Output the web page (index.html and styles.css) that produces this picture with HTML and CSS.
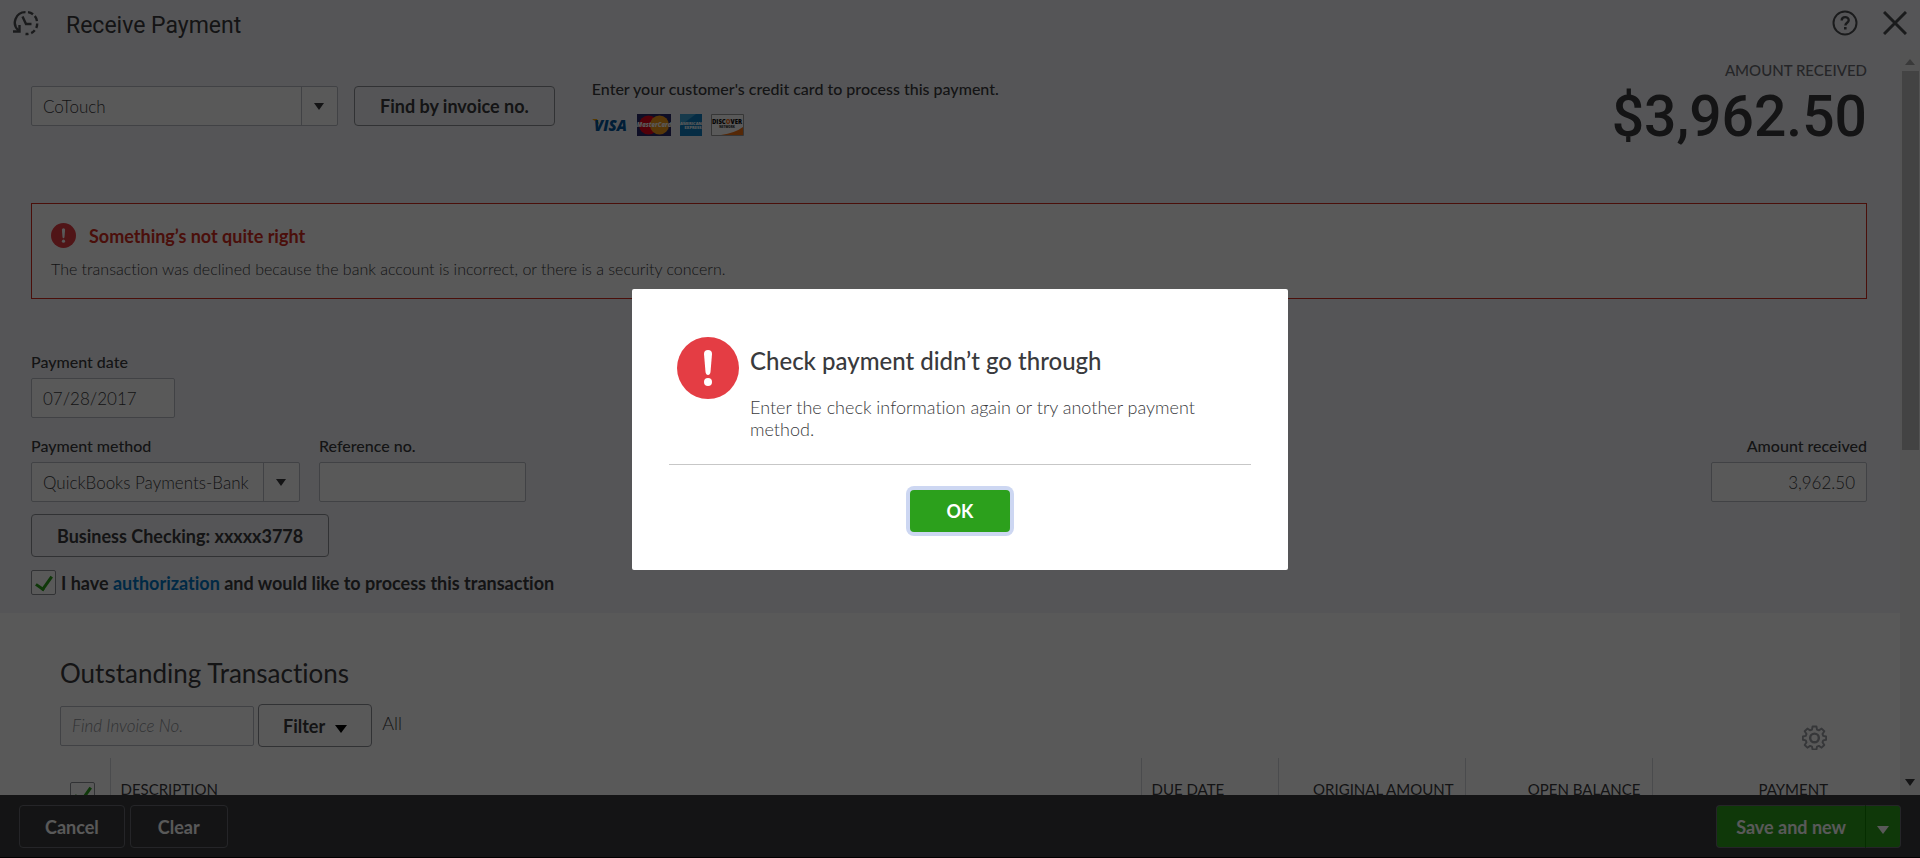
FILE: index.html
```html
<!DOCTYPE html>
<html lang="en">
<head>
    <meta charset="UTF-8">
    <meta name="viewport" content="width=device-width, initial-scale=1.0">
    <title>Receive Payment</title>
    <link rel="stylesheet" href="styles.css">
</head>
<body>
<div class="page">
    <header class="topbar">
        <svg class="history-icon" viewBox="0 0 26 26" fill="none" stroke="#4c4d52" stroke-width="2.400">
            <path d="M5.500 20.500A10.500 10.500 0 0 1 12.500 2.100"/>
            <path d="M15 2.100A10.500 10.500 0 0 1 24 11.500" stroke-dasharray="5.500 2.500"/>
            <path d="M24.200 13.500A10.500 10.500 0 0 1 12.500 24" stroke-dasharray="4.500 2.800"/>
            <path d="M0 21.500h6.500V15"/>
            <path d="M9.500 6.500l3.500 7.500h5.500"/>
        </svg>
        <h1>Receive Payment</h1>
        <button class="icon-button" type="button" aria-label="Help">
            <svg width="26" height="26" viewBox="0 0 26 26" fill="none" stroke="#4c4d52" stroke-width="2">
                <circle cx="13" cy="13" r="11.500"/>
                <path d="M9.700 10.500c0-4.600 7-4.400 7 -.3 0 2.500-3.300 2.600-3.300 5.300" stroke-width="2.400"/>
                <path d="M13.300 17v2.500" stroke-width="2.600"/>
            </svg>
        </button>
        <button class="icon-button" type="button" aria-label="Close">
            <svg width="24" height="24" viewBox="0 0 24 24" fill="none" stroke="#4c4d52" stroke-width="3">
                <path d="M1 1l22 22M23 1L1 23"/>
            </svg>
        </button>
    </header>

    <div class="body">
        <main class="content">
            <section class="payment">
                <div class="customer-row">
                    <div class="dropdown customer">
                        <select aria-label="Customer">
                            <option>CoTouch</option>
                        </select>
                        <span class="arrow"></span>
                    </div>
                    <button class="btn find" type="button">Find by invoice no.</button>
                    <div class="cards">
                        <p>Enter your customer's credit card to process this payment.</p>
                        <div class="card-logos">
                            <svg width="36" height="22" viewBox="0 0 36 22">
                                <path d="M0 5h5l2 5z" fill="#f7a600"/>
                                <text x="2" y="17" class="logo-text" font-size="15" fill="#00579f">VISA</text>
                            </svg>
                            <svg width="34" height="22" viewBox="0 0 34 22">
                                <path fill="#2a2a6c" d="M0 0h34v22H0z"/>
                                <circle cx="11.500" cy="11" r="9.500" fill="#eb001b"/>
                                <circle cx="22.500" cy="11" r="9.500" fill="#f79e1b"/>
                                <text x="17" y="13" class="logo-text" font-size="6" fill="#fff" text-anchor="middle">MasterCard</text>
                            </svg>
                            <svg width="22" height="22" viewBox="0 0 22 22">
                                <path fill="#0f7fc4" d="M0 0h22v22H0z"/>
                                <path fill="#5fc0ea" d="M0 0h16L0 12z" opacity=".6"/>
                                <text x="11" y="11" class="logo-text plain" font-size="4" fill="#fff" text-anchor="middle">AMERICAN</text>
                                <text x="13" y="15" class="logo-text plain" font-size="4" fill="#fff" text-anchor="middle">EXPRESS</text>
                            </svg>
                            <svg width="33" height="22" viewBox="0 0 33 22">
                                <path fill="#fff" stroke="#9a9a9a" d="M.5.500h32v21H.5z"/>
                                <path fill="#f47216" d="M10 21q14-2 22-8v8z"/>
                                <text x="16" y="10" class="logo-text plain" font-size="6" fill="#111" text-anchor="middle">DISC<tspan fill="#f47216">O</tspan>VER</text>
                                <text x="16" y="14" class="logo-text plain" font-size="3" fill="#333" text-anchor="middle">NETWORK</text>
                            </svg>
                        </div>
                    </div>
                    <div class="total">
                        <div class="total-label">AMOUNT RECEIVED</div>
                        <div class="total-value">$3,962.50</div>
                    </div>
                </div>

                <div class="alert" role="alert">
                    <div class="alert-title">
                        <svg width="25" height="25" viewBox="0 0 62 62">
                            <circle cx="31" cy="31" r="31" fill="#e43d44"/>
                            <path fill="#fff" d="M27 17q0-4 4-4t4 4l-1.500 18q-.5 3-2.500 3t-2.500-3z"/>
                            <circle cx="31" cy="45" r="4" fill="#fff"/>
                        </svg>
                        <strong>Something’s not quite right</strong>
                    </div>
                    <p>The transaction was declined because the bank account is incorrect, or there is a security concern.</p>
                </div>

                <div class="field date">
                    <label for="payDate">Payment date</label>
                    <input type="text" id="payDate" value="07/28/2017">
                </div>

                <div class="method-row">
                    <div class="field method">
                        <label for="payMethod">Payment method</label>
                        <div class="dropdown">
                            <select id="payMethod">
                                <option>QuickBooks Payments-Bank</option>
                            </select>
                            <span class="arrow"></span>
                        </div>
                    </div>
                    <div class="field reference">
                        <label for="refNo">Reference no.</label>
                        <input type="text" id="refNo">
                    </div>
                    <div class="field amount">
                        <label for="amount">Amount received</label>
                        <input type="text" id="amount" value="3,962.50">
                    </div>
                </div>

                <button class="btn account" type="button">Business Checking: xxxxx3778</button>

                <div class="authorize">
                    <input type="checkbox" id="authorize" checked>
                    <label for="authorize">I have <a href="#">authorization</a> and would like to process this transaction</label>
                </div>
            </section>

            <section class="outstanding">
                <h2>Outstanding Transactions</h2>
                <div class="tools">
                    <input type="text" class="search" placeholder="Find Invoice No." aria-label="Find Invoice No.">
                    <button class="btn filter" type="button">Filter <span class="arrow"></span></button>
                    <span class="all">All</span>
                    <button class="icon-button gear" type="button" aria-label="Settings">
                        <svg width="25" height="25" viewBox="0 0 26 26" fill="none" stroke="#9a9da4" stroke-width="2" stroke-linejoin="round">
                            <path d="M11 1.500h4l.6 3.300 2 .8 2.800-1.900 2.800 2.800-1.900 2.800.8 2 3 .6v3.500l-3 .6-.8 2 1.900 2.800-2.800 2.800-2.800-1.900-2 .8-.6 3h-4l-.6-3-2-.8-2.800 1.900-2.800-2.800 1.900-2.800-.8-2-3-.6v-3.500l3-.6.8-2-1.900-2.800 2.800-2.800 2.800 1.900 2-.8z"/>
                            <circle cx="13" cy="13.500" r="4.500" stroke-width="2.500"/>
                        </svg>
                    </button>
                </div>
                <table>
                    <thead>
                    <tr>
                        <th class="col-check"><input type="checkbox" aria-label="Select all" checked></th>
                        <th>DESCRIPTION</th>
                        <th class="col-due">DUE DATE</th>
                        <th class="col-money">ORIGINAL AMOUNT</th>
                        <th class="col-money">OPEN BALANCE</th>
                        <th class="col-money">PAYMENT</th>
                    </tr>
                    </thead>
                </table>
            </section>
        </main>
        <div class="scrollbar">
            <span class="arrow up"></span>
            <div class="track"><div class="thumb"></div></div>
            <span class="arrow"></span>
        </div>
    </div>

    <footer class="bottombar">
        <button class="btn dark" type="button">Cancel</button>
        <button class="btn dark clear" type="button">Clear</button>
        <div class="save">
            <button class="btn green" type="button">Save and new</button>
            <button class="btn green more" type="button" aria-label="More save options"><span class="arrow"></span></button>
        </div>
    </footer>
</div>

<div class="overlay">
    <div class="modal" role="dialog" aria-labelledby="modalTitle">
        <div class="message">
            <svg width="62" height="62" viewBox="0 0 62 62">
                <circle cx="31" cy="31" r="31" fill="#e43d44"/>
                <path fill="#fff" d="M27 17q0-4 4-4t4 4l-1.500 18q-.5 3-2.500 3t-2.500-3z"/>
                <circle cx="31" cy="45" r="4" fill="#fff"/>
            </svg>
            <div class="message-text">
                <h3 id="modalTitle">Check payment didn’t go through</h3>
                <p>Enter the check information again or try another payment method.</p>
            </div>
        </div>
        <div class="actions">
            <button class="btn green ok" type="button">OK</button>
        </div>
    </div>
</div>
</body>
</html>
```
FILE: styles.css
```css
* {
    box-sizing: border-box;
}

body {
    margin: 0;
    font-family: Lato, "Liberation Sans", sans-serif;
    font-size: 17px;
    font-variant-ligatures: none;
    color: #393a3d;
}

h1, h2, h3, p {
    margin: 0;
}

input, select, button {
    font-family: inherit;
    font-size: inherit;
    color: inherit;
}

.page {
    display: flex;
    flex-direction: column;
    height: 100vh;
    background: #f4f4f8;
    overflow: hidden;
}

/* header */
.topbar {
    display: flex;
    align-items: center;
    flex: none;
    height: 50px;
    padding: 0 13px 4px;
}

.topbar h1 {
    flex: 1;
    margin: 4px 0 0 27px;
    font-family: Roboto, sans-serif;
    font-size: 23px;
    font-weight: 400;
}

.history-icon {
    width: 26px;
    height: 26px;
}

.icon-button {
    display: flex;
    padding: 0;
    margin-left: 25px;
    border: none;
    background: none;
    cursor: pointer;
}

/* controls */
.btn {
    height: 43px;
    padding: 0 25px;
    border: 1px solid #8d9096;
    border-radius: 4px;
    background: transparent;
    font-size: 18px;
    font-weight: 700;
    white-space: nowrap;
    cursor: pointer;
}

.arrow {
    display: inline-block;
    border: 5px solid transparent;
    border-top: 7px solid #393a3d;
    border-bottom: none;
}

input[type="text"], select {
    width: 100%;
    height: 40px;
    padding: 0 11px;
    border: 1px solid #babec5;
    border-radius: 2px;
    background: #fff;
    font-weight: 300;
}

select {
    appearance: none;
}

.dropdown {
    position: relative;
}

.dropdown .arrow {
    position: absolute;
    top: 17px;
    right: 14px;
}

.dropdown::after {
    content: "";
    position: absolute;
    top: 0;
    bottom: 0;
    right: 36px;
    border-left: 1px solid #babec5;
}

input[type="checkbox"] {
    appearance: none;
    display: grid;
    place-items: center;
    width: 25px;
    height: 25px;
    margin: 0;
    border: 1px solid #8d9096;
    border-radius: 2px;
    background: #fff;
}

input[type="checkbox"]:checked::before {
    content: "";
    width: 7px;
    height: 14px;
    margin-bottom: 3px;
    border: solid #2ca01c;
    border-width: 0 3px 3px 0;
    transform: rotate(35deg);
}

/* payment form */
.body {
    display: flex;
    flex: 1;
    min-height: 0;
}

.content {
    flex: 1;
    overflow: hidden;
}

.payment {
    padding: 10px 33px 18px 31px;
}

.customer-row {
    display: flex;
    align-items: flex-start;
    height: 143px;
}

.customer {
    width: 307px;
    margin: 26px 16px 0 0;
}

.find {
    height: 40px;
    margin: 26px 37px 0 0;
}

.cards {
    flex: 1;
    padding-top: 18px;
    font-size: 16px;
    line-height: 22px;
    font-weight: 500;
}

.card-logos {
    display: flex;
    gap: 9px;
    margin-top: 14px;
}

.logo-text {
    font-family: "Open Sans", sans-serif;
    font-style: italic;
    font-weight: 800;
}

.plain {
    font-style: normal;
}

.total {
    text-align: right;
}

.total-label {
    font-size: 15px;
    line-height: 20px;
    color: #6b6c72;
    font-weight: 500;
}

.total-value {
    font-family: Roboto, sans-serif;
    font-size: 57px;
    line-height: 74px;
    font-weight: 500;
}

.alert {
    height: 96px;
    padding: 19px;
    border: 1px solid #d52b1e;
    background: #fff;
    font-size: 16px;
    font-weight: 300;
}

.alert-title {
    display: flex;
    align-items: center;
    gap: 13px;
    margin-bottom: 11px;
    font-size: 18px;
    color: #d52b1e;
}

.alert-title strong {
    font-weight: 700;
}

.field label {
    display: block;
    margin-bottom: 6px;
    font-size: 16px;
    line-height: 20px;
    font-weight: 500;
}

.date {
    width: 144px;
    margin-top: 53px;
}

.method-row {
    display: flex;
    margin: 18px 0 12px;
}

.method {
    width: 269px;
    margin-right: 19px;
}

.reference {
    width: 207px;
}

.amount {
    width: 156px;
    margin-left: auto;
    text-align: right;
}

.amount input {
    text-align: right;
}

.authorize {
    display: flex;
    align-items: center;
    gap: 5px;
    margin-top: 13px;
    font-size: 18px;
    font-weight: 700;
}

.authorize a {
    color: #0077c5;
    text-decoration: none;
}

/* outstanding transactions */
.outstanding {
    padding: 44px 61px 0 60px;
    background: #fff;
}

.outstanding h2 {
    font-size: 26px;
    line-height: 32px;
    font-weight: 400;
}

.tools {
    display: flex;
    align-items: center;
    gap: 4px;
    height: 43px;
    margin: 15px 0 11px;
}

.tools .search {
    width: 194px;
}

.search::placeholder {
    font-style: italic;
    color: #8d9096;
}

.filter {
    padding: 0 24px;
}

.filter .arrow {
    margin: 0 0 0 6px;
    border-width: 8px 6px 0;
    border-top-color: #000;
}

.all {
    padding: 0 0 5px 6px;
    font-size: 18px;
    font-weight: 300;
}

.gear {
    align-self: flex-end;
    margin: 0 12px -3px auto;
}

table {
    width: 100%;
    border-collapse: collapse;
}

th {
    height: 62px;
    padding: 0 11px 0 10px;
    border-left: 1px solid #d4d7dc;
    font-size: 15px;
    font-weight: 400;
    text-align: left;
}

th:first-child {
    border-left: none;
}

.col-check {
    width: 50px;
    padding-top: 10px;
}

.col-due {
    width: 137px;
}

.col-money {
    width: 187px;
    text-align: right;
}

.scrollbar {
    display: flex;
    flex-direction: column;
    align-items: center;
    width: 20px;
    padding: 9px 0;
    background: #f1f1f1;
}

.track {
    flex: 1;
    width: 17px;
    margin: 6px 0;
}

.thumb {
    height: 54%;
    background: #c1c1c1;
}

.up {
    border: 5px solid transparent;
    border-top: none;
    border-bottom: 6px solid #a3a3a3;
}

/* footer */
.bottombar {
    display: flex;
    flex: none;
    gap: 5px;
    height: 63px;
    padding: 10px 19px;
    border-bottom: 1px solid #000;
    background: #393a3d;
    color: #fff;
}

.dark {
    border-color: #6b6c72;
}

.clear {
    padding: 0 27px;
}

.green {
    border-color: #6b6c72;
    background: #2ca01c;
    color: #fff;
}

.save {
    display: flex;
    margin-left: auto;
}

.save .btn {
    padding: 0 19px;
    border-radius: 4px 0 0 4px;
    border-right: none;
}

.save .more {
    padding: 0 11px;
    border-left-color: #108000;
    border-right: 1px solid #6b6c72;
    border-radius: 0 4px 4px 0;
}

.more .arrow {
    border-width: 8px 6px 0;
    border-top-color: #fff;
}

/* dialog */
.overlay {
    position: fixed;
    inset: 0;
    display: flex;
    align-items: center;
    justify-content: center;
    background: rgba(0, 0, 0, 0.65);
}

.modal {
    width: 656px;
    padding: 48px 37px 38px;
    border-radius: 2px;
    background: #fff;
}

.message {
    display: flex;
    gap: 11px;
    padding: 0 8px 24px;
    border-bottom: 1px solid #c7c7c7;
}

.message svg {
    flex: none;
}

.message h3 {
    margin: 9px 0 20px;
    font-size: 24px;
    line-height: 30px;
    font-weight: 500;
}

.message p {
    font-size: 18px;
    line-height: 22px;
    font-weight: 300;
}

.actions {
    display: flex;
    justify-content: center;
    padding-top: 25px;
}

.ok {
    width: 100px;
    height: 42px;
    border: none;
    box-shadow: 0 0 0 4px #cdd7f2;
}
```
